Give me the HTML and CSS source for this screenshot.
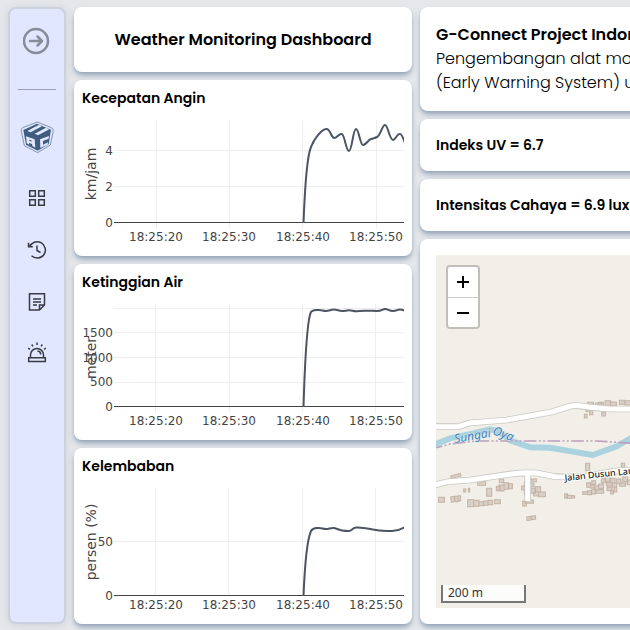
FILE: index.html
```html
<!DOCTYPE html>
<html lang="id">
<head>
<meta charset="utf-8">
<title>Weather Monitoring Dashboard</title>
<link rel="stylesheet" href="styles.css">
</head>
<body>
<div class="page">
  <nav class="sidebar" aria-label="Menu">
    <button class="toggle" type="button" aria-label="Buka menu">
      <svg width="28" height="28" viewBox="0 0 28 28"><circle cx="13" cy="14" r="12"/><path d="M7 14H19M14.500 9.500L19 14L14.500 18.500"/></svg>
    </button>
    <hr class="divider">
    <a class="logo" href="#" aria-label="Beranda">
      <svg width="34" height="33" viewBox="0 0 102 99">
        <path d="M52 3L96 21Q101 25 99 34L91 72L53 95L13 74L4 31Q2 24 8 20Z" fill="#e0e7ff" stroke="#8496b2" stroke-width="3"/>
        <path d="M51 8L93 26L86 70L53 89L18 71L10 27Z" fill="#405d7d"/>
        <path d="M22 30L56 12L66 16L32 34ZM44 38L78 20L88 25L54 43Z" fill="#e0e7ff"/>
        <path d="M34 24L58 13L63 15L39 27Z" fill="#e0e7ff"/>
        <path d="M18 46L44 55L46 80L37 75L36 69L27 65L28 71L20 67ZM27 56L28 59L35 62L34 58Z" fill="#e0e7ff" fill-rule="evenodd"/>
        <path d="M60 55L87 45L86 53L69 60L69 71L84 64L83 71L61 81Z" fill="#e0e7ff"/>
      </svg>
    </a>
    <div class="menu">
      <a href="#" aria-label="Dasbor"><svg viewBox="0 0 20 20"><path d="M2.700 2.700h5.600v5.600H2.700zM11.700 2.700h5.600v5.600h-5.600zM2.700 11.700h5.600v5.600H2.700zM11.700 11.700h5.600v5.600h-5.600z"/></svg></a>
      <a href="#" aria-label="Riwayat"><svg viewBox="0 0 20 20"><path d="M2.500 7A8.200 8.200 0 1 1 4.500 15.800M1.500 2.800V6.800H5.800M10 5.500V10.500L13.500 12.500"/></svg></a>
      <a href="#" aria-label="Catatan"><svg viewBox="0 0 20 20"><path d="M2.500 1.700H17.500V13L12.500 18H2.500ZM12.500 17.500V13H17M6 7H14M6 10H14M6 13H10"/></svg></a>
      <a href="#" aria-label="Peringatan"><svg viewBox="0 0 20 20"><path d="M3.500 13.500V11a6.500 6.500 0 0 1 13 0V13.500M1.700 13.700H18.300V17.500H1.700ZM10.500 7a3.500 3.500 0 0 1 3.200 3.500M10-1.500V1M4.700 .5L5.900 2.400M15.300 .5L14.100 2.400M1.200 4.200L3 5.300M18.800 4.200L17 5.300"/></svg></a>
    </div>
  </nav>

  <main class="column">
    <header class="card heading"><h1>Weather Monitoring Dashboard</h1></header>
    <section class="card chart">
      <h2>Kecepatan Angin</h2>
      <svg viewBox="0 0 322 148" role="img" aria-label="Grafik kecepatan angin">
        <path class="grid" d="M74.500 12V120M147.500 12V120M220.500 12V120M294.500 12V120M32 42.500H322M32 78.500H322"/>
        <path class="axis" d="M32 114.500H322"/>
        <path class="line" d="M221.500 115C223 76 225 48 229 39C232 31 239 22 244 21C248 20 249 29 252 30C255 30 257 25 260 26C263 28 264 43 267 43C270 43 271 21 274 21C277 21 278 37 281 37C284 37 286 32 289 31S293 30 295 29C299 27 300 17 303 17C306 17 307 31 311 32C314 32 315 25 318 26C320 26 321 30 323 35"/>
        <g class="ticks end"><text x="31" y="47">4</text><text x="31" y="83">2</text><text x="31" y="119">0</text></g>
        <g class="ticks"><text x="74" y="133">18:25:20</text><text x="147" y="133">18:25:30</text><text x="221" y="133">18:25:40</text><text x="294" y="133">18:25:50</text></g>
        <text class="unit" transform="translate(14 66) rotate(-90)">km/jam</text>
      </svg>
    </section>
    <section class="card chart">
      <h2>Ketinggian Air</h2>
      <svg viewBox="0 0 322 148" role="img" aria-label="Grafik ketinggian air">
        <path class="grid" d="M73.500 12V120M147.500 12V120M220.500 12V120M293.500 12V120M32 16.500H322M32 40.500H322M32 65.500H322M32 90.500H322"/>
        <path class="axis" d="M32 114.500H322"/>
        <path class="line" d="M221.500 115C223 66 225 28 229 20C231 17 234 18 237 18S241 19 244 19S249 17.500 252 17.500S257 19 260 19S264 18.300 267 18.300S271 19.300 274 19.300S278 18.700 284 18.700S290 19 295 19S300 17 303 17S307 19 311 19S315 17.500 318 17.500S321 18 323 19"/>
        <g class="ticks end"><text x="31" y="45">1500</text><text x="31" y="70">1000</text><text x="31" y="94">500</text><text x="31" y="119">0</text></g>
        <g class="ticks"><text x="74" y="133">18:25:20</text><text x="147" y="133">18:25:30</text><text x="221" y="133">18:25:40</text><text x="294" y="133">18:25:50</text></g>
        <text class="unit" transform="translate(14 66) rotate(-90)">meter</text>
      </svg>
    </section>
    <section class="card chart">
      <h2>Kelembaban</h2>
      <svg viewBox="0 0 322 148" role="img" aria-label="Grafik kelembaban">
        <path class="grid" d="M73.500 12V120M146.500 12V120M220.500 12V120M293.500 12V120M32 65.500H322"/>
        <path class="axis" d="M32 119.500H322"/>
        <path class="line" d="M221.500 120C223 84 225 64 229 55C231 51 234 52 237 52S241 53 244 53S249 51.500 252 52S257 54 260 54.500S264 55 267 55S270 52 274 51.500C280 51 288 53 294 54S305 55 310 55S318 54 323 51"/>
        <g class="ticks end"><text x="31" y="70">50</text><text x="31" y="124">0</text></g>
        <g class="ticks"><text x="74" y="133">18:25:20</text><text x="147" y="133">18:25:30</text><text x="221" y="133">18:25:40</text><text x="294" y="133">18:25:50</text></g>
        <text class="unit" transform="translate(14 66) rotate(-90)">persen (%)</text>
      </svg>
    </section>
  </main>

  <aside class="column">
    <section class="card about">
      <h2>G-Connect Project Indonesia</h2>
      <p>Pengembangan alat monitoring<br>(Early Warning System) untuk</p>
    </section>
    <section class="card reading"><h2>Indeks UV = 6.7</h2></section>
    <section class="card reading"><h2>Intensitas Cahaya = 6.9 lux</h2></section>
    <section class="card mapcard">
      <div class="map">
        <svg class="tiles" role="img" aria-label="Peta Sungai Oya">
          <g transform="translate(-6 125) scale(.3334)">
            <path d="M0 199L60 175L130 160L180 148L205 154L240 181L300 202L360 203L488 225L560 199L610 170L760 100L1400 60" fill="none" stroke="#aad3df" stroke-width="18"/>
            <path d="M0 208L60 192L140 183H500L610 190L1400 220" fill="none" stroke="#bd9fbd" stroke-width="5" stroke-dasharray="38 7 6 7 6 7"/>
            <g fill="#d9d0c9" stroke="#c4b2a4" stroke-width="3">
              <path d="M472 67h18v11h-18zM496 69h18v10h-18zM505 67h15v10h-15zM525 62h17v17h-17zM541 66h18v12h-18zM568 61h16v12h-16zM585 62h18v13h-18zM466 87l10-3 3 8-10 3zM478 92h10v12h-10zM463 103h8v11h-8zM515 97h11v11h-11z"/>
              <path d="M62 288l29-8 2 8-29 8zM101 327h6v9h-6zM115 325h4v11h-4zM143 305h24v11h-24zM170 325h15v24h-15zM26 352h17v15h-17zM62 351l10-2 3 15-11 3zM74 349h10v16h-10zM84 347h8v16h-8zM113 359h18v21h-18zM131 361h16v18h-16zM147 365h14v12h-14zM161 363h13v13h-13zM174 361h14v13h-14zM194 359h17v12h-17z"/>
              <path d="M208 297h13v11h-13zM199 319h12v13h-12zM207 315h15v18h-15zM222 308h13v20h-13zM236 311h11v15h-11zM275 318h12v12h-12zM283 306h9v38h-9zM303 297h16v8h-16zM302 310h10v10h-10zM303 325h14v15h-14zM316 320h16v15h-16zM311 335h15v13h-15zM326 336h20v14h-20zM278 363h11v15h-11zM286 360h24v10h-24zM290 411l12-2 1 11-12 1zM303 409l13-2 1 10-13 2z"/>
              <path d="M404 341h8v14h-8zM411 346h14v9h-14zM425 347h9v7h-9zM467 250h12v22h-12zM485 302h12v11h-12zM470 308h11v14h-11zM481 315h12v9h-12zM494 317h12v13h-12zM506 312h14v14h-14zM458 335h14v8h-14zM472 332h12v12h-12zM485 328h11v14h-11zM498 329h23v11h-23zM514 296h12v12h-12zM525 290h15v15h-15zM542 295h13v13h-13zM529 308h17v10h-17zM547 309h13v12h-13zM531 322h15v10h-15zM542 331h8v11h-8zM552 322h8v14h-8zM560 297h13v14h-13zM569 309h17v10h-17zM578 291h15v14h-15zM591 300h12v14h-12zM574 250h10v12h-10z"/>
            </g>
            <g fill="none" stroke-linejoin="round">
              <path d="M0 140H86L118 129L230 120L365 96L422 78Q440 74 480 82L540 87H1400M0 318L55 305L120 300L250 281Q285 277 320 279L375 290L460 291L550 274L700 262L1400 220M293 280V364" stroke="#c8c8c3" stroke-width="20"/>
              <path d="M0 140H86L118 129L230 120L365 96L422 78Q440 74 480 82L540 87H1400M0 318L55 305L120 300L250 281Q285 277 320 279L375 290L460 291L550 274L700 262L1400 220M293 280V363" stroke="#fff" stroke-width="15"/>
            </g>
          </g>
          <text class="river" transform="translate(19 188) rotate(-10)">Sungai</text>
          <text class="river" transform="translate(56 179) rotate(20)">Oya</text>
          <text class="road" transform="translate(129 226) rotate(-6)">Jalan Dusun Lanteng</text>
        </svg>
        <div class="zoom">
          <button type="button" aria-label="Perbesar"><svg width="14" height="14" viewBox="0 0 14 14"><path d="M1 7H13M7 1V13"/></svg></button>
          <button type="button" aria-label="Perkecil"><svg width="14" height="14" viewBox="0 0 14 14"><path d="M1 7H13"/></svg></button>
        </div>
        <div class="scale">200 m</div>
      </div>
    </section>
  </aside>
</div>
</body>
</html>
```
FILE: styles.css
```css
* { box-sizing: border-box; }

body {
  margin: 0;
  overflow: hidden;
  background: #e5e7eb;
  color: #000;
  font-family: Poppins, Inter, sans-serif;
}

h1, h2, p { margin: 0; }

.page {
  display: grid;
  grid-template-columns: 58px minmax(338px, 1fr) minmax(420px, 1.5fr);
  gap: 8px;
  min-height: 100vh;
  padding: 7px 8px 6px;
}

.sidebar {
  display: flex;
  flex-direction: column;
  align-items: center;
  padding-top: 18px;
  border: 2px solid #cbd2de;
  border-radius: 8px;
  background: #e0e7ff;
  box-shadow: 0 1px 8px #cdd0d6;
}

.toggle {
  display: block;
  height: 28px;
  padding: 0;
  border: 0;
  background: none;
}

.toggle svg {
  display: block;
  fill: none;
  stroke: #888b98;
  stroke-width: 2.5;
  stroke-linecap: round;
  stroke-linejoin: round;
}

.divider {
  width: 38px;
  height: 1px;
  margin: 34px 0 31px;
  border: 0;
  background: #9ca0b0;
}

.logo, .logo svg { display: block; }

.menu {
  display: grid;
  gap: 32px;
  margin-top: 34px;
}

.menu a { display: block; height: 20px; }

.menu svg {
  display: block;
  overflow: visible;
  width: 20px;
  height: 20px;
  fill: none;
  stroke: #3b3b43;
  stroke-width: 1.5;
}

.column {
  display: flex;
  flex-direction: column;
  gap: 8px;
  min-width: 0;
}

.card {
  border-radius: 8px;
  background: #fff;
  box-shadow: 0 4px 6px -1px #94a3b8, 0 2px 4px -2px #94a3b8;
}

h1, h2 { font-weight: 600; white-space: nowrap; }

.heading { padding: 20px; text-align: center; }
h1 { font-size: 16px; line-height: 25px; }

.chart {
  display: flex;
  flex: 1;
  flex-direction: column;
  min-height: 0;
  padding: 8px 8px 0;
}

.chart h2, .reading h2 { font-size: 14px; line-height: 20px; }
.chart svg { display: block; flex: 1; width: 100%; min-height: 0; }

.grid, .axis, .line { fill: none; }
.grid { stroke: #eee; }
.axis { stroke: #444; }
.line { stroke: #4b5563; stroke-width: 2; }

.ticks, .unit {
  fill: #444;
  font-family: Verdana, "DejaVu Sans", sans-serif;
  text-anchor: middle;
}

.ticks { font-size: 12px; }
.end { text-anchor: end; }
.unit { font-size: 14px; }

.about, .reading, .mapcard { padding: 16px; }
.about { font-size: 16px; line-height: 24px; }
.about h2 { font-size: 16px; }
.about p { font-weight: 300; white-space: nowrap; }

.mapcard { display: flex; flex: 1; }

.map {
  position: relative;
  display: flex;
  flex: 1;
  overflow: hidden;
  background: #f2efe9;
}

.tiles { flex: 1; width: 100%; height: 100%; }

.river, .road {
  font-family: "Noto Sans", sans-serif;
  paint-order: stroke;
}

.river {
  fill: #4b87bd;
  font-size: 12px;
  font-style: italic;
  stroke: #d6e6ea;
  stroke-width: 1;
}

.road {
  fill: #222;
  font-size: 9px;
  font-weight: 500;
  stroke: #fff;
  stroke-width: 2;
}

.zoom {
  position: absolute;
  top: 10px;
  left: 10px;
  border: 2px solid #c2bfba;
  border-radius: 4px;
  background: #fff;
}

.zoom button {
  display: grid;
  place-items: center;
  width: 30px;
  height: 30px;
  padding: 0;
  border: 0;
  background: none;
}

.zoom button + button { border-top: 1px solid #ccc; }
.zoom svg { stroke: #000; stroke-width: 2; }

.scale {
  position: absolute;
  bottom: 5px;
  left: 5px;
  width: 85px;
  height: 18px;
  padding-left: 5px;
  border: 2px solid #777;
  border-top: 0;
  background: #fcfcfa;
  color: #333;
  font: 12px/16px "Noto Sans", sans-serif;
}
```
